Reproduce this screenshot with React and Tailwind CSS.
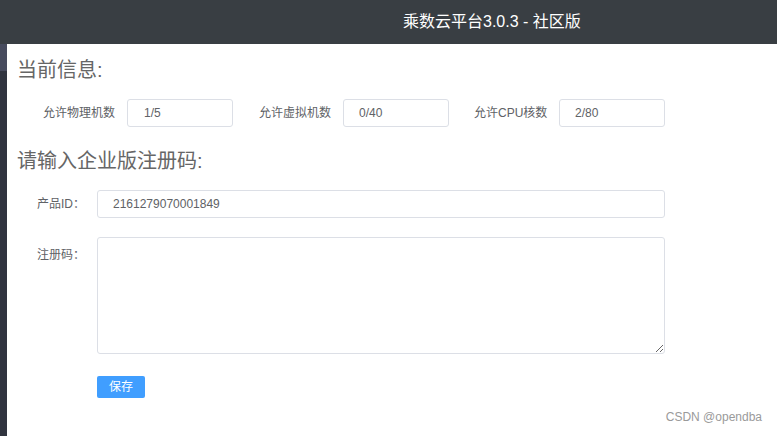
export default function App() {
  const font = { fontFamily: '"Liberation Sans", "Noto Sans CJK SC", sans-serif' };

  return (
    <div className="w-[777px] h-[436px] bg-white flex flex-col overflow-hidden" style={font}>
      {/* Header */}
      <div className="h-[44px] shrink-0 bg-[#393e43] flex items-center pl-[403px]">
        <span className="text-white text-[16px] leading-none">乘数云平台3.0.3 - 社区版</span>
      </div>

      <div className="flex flex-1">
        {/* Sidebar strip */}
        <div className="w-[7px] flex flex-col bg-[#30343f]">
          <div className="h-[27px] bg-[#474b5e]"></div>
        </div>

        {/* Content */}
        <div className="flex-1 relative pl-[10px] pt-[14px]">
          <h2 className="text-[20px] leading-[24px] text-[#666666]">当前信息:</h2>

          <div className="flex items-center mt-[17px] pl-[26px] text-[12px] text-[#606266]">
            <span className="w-[84px]">允许物理机数</span>
            <div className="w-[106px] h-[28px] border border-[#dcdfe6] rounded-[3px] flex items-center pl-[16px] text-[#606266]">1/5</div>
            <span className="ml-[26px] w-[84px]">允许虚拟机数</span>
            <div className="w-[106px] h-[28px] border border-[#dcdfe6] rounded-[3px] flex items-center pl-[15px]">0/40</div>
            <span className="ml-[25px] w-[85px]">允许CPU核数</span>
            <div className="w-[106px] h-[28px] border border-[#dcdfe6] rounded-[3px] flex items-center pl-[15px]">2/80</div>
          </div>

          <h2 className="mt-[22px] text-[20px] leading-[24px] text-[#666666]">请输入企业版注册码:</h2>

          <div className="flex items-center mt-[17px] pl-[20px] text-[12px] text-[#606266]">
            <span className="w-[60px]">产品ID：</span>
            <div className="w-[568px] h-[28px] border border-[#dcdfe6] rounded-[3px] flex items-center pl-[15px] text-[12px]">2161279070001849</div>
          </div>

          <div className="flex items-start mt-[19px] pl-[20px] text-[12px] text-[#606266]">
            <span className="w-[60px] mt-[9px]">注册码：</span>
            <textarea className="w-[568px] h-[117px] border border-[#dcdfe6] rounded-[3px] outline-none resize-y"></textarea>
          </div>

          <div className="mt-[22px] pl-[80px]">
            <button className="w-[48px] h-[22px] bg-[#409eff] text-white text-[12px] rounded-[2px] flex items-center justify-center">保存</button>
          </div>

          <span className="absolute right-[15px] bottom-[10px] text-[12px] text-[#9a9a9a]">CSDN @opendba</span>
        </div>
      </div>
    </div>
  );
}
